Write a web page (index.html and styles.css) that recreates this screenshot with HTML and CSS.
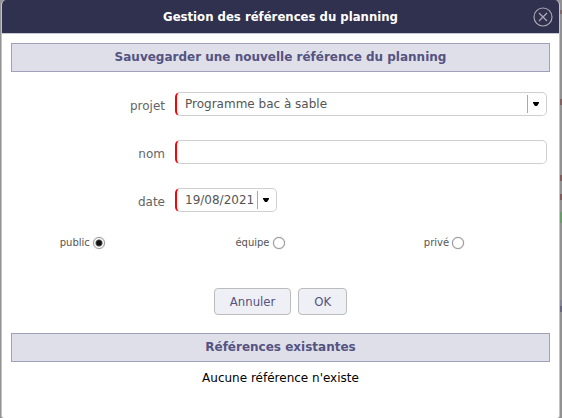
FILE: index.html
```html
<!DOCTYPE html>
<html lang="fr">
<head>
    <meta charset="UTF-8">
    <meta name="viewport" content="width=device-width, initial-scale=1.0">
    <title>Gestion des références du planning</title>
    <link rel="stylesheet" href="styles.css">
</head>
<body>
    <div class="dialog" role="dialog" aria-labelledby="dialogTitle">
        <div class="dialog-header">
            <h1 class="dialog-title" id="dialogTitle">Gestion des références du planning</h1>
            <button type="button" class="close-btn" aria-label="Fermer">
                <svg width="20" height="20" viewBox="0 0 20 20" fill="none" stroke="#a9a9b4">
                    <circle cx="10" cy="10" r="9" stroke-width="1.2"/>
                    <path d="M6 6l8 8M14 6l-8 8" stroke-width="1.3"/>
                </svg>
            </button>
        </div>
        <form class="dialog-body">
            <h2 class="section-title">Sauvegarder une nouvelle référence du planning</h2>
            <div class="fields">
                <div class="field">
                    <label class="field-label" for="projet">projet</label>
                    <div class="control">
                        <select id="projet" class="control-input control-select">
                            <option>Programme bac à sable</option>
                        </select>
                    </div>
                </div>
                <div class="field">
                    <label class="field-label" for="nom">nom</label>
                    <div class="control">
                        <input type="text" id="nom" class="control-input">
                    </div>
                </div>
                <div class="field">
                    <label class="field-label" for="date">date</label>
                    <div class="control control-date">
                        <input type="text" id="date" class="control-input" value="19/08/2021">
                        <button type="button" class="arrow-btn" aria-label="Calendrier"></button>
                    </div>
                </div>
            </div>
            <div class="privacy">
                <label class="privacy-item">public <input type="radio" name="privacy" class="radio" checked></label>
                <label class="privacy-item">équipe <input type="radio" name="privacy" class="radio"></label>
                <label class="privacy-item">privé <input type="radio" name="privacy" class="radio"></label>
            </div>
            <div class="actions">
                <button type="button" class="btn">Annuler</button>
                <button type="submit" class="btn">OK</button>
            </div>
            <h2 class="section-title">Références existantes</h2>
            <p class="empty">Aucune référence n'existe</p>
        </form>
    </div>
</body>
</html>
```

FILE: styles.css
```css
* {
    box-sizing: border-box;
}
body {
    margin: 0;
    padding: 0 2px 0 1px;
    min-height: 100vh;
    display: flex;
    font-family: Verdana, "DejaVu Sans", sans-serif;
    font-size: 12px;
    color: #656565;
    /* dimmed planning behind the dialog */
    background: #929292 linear-gradient(#929292 10px, #806868 10px 14px, #929292 14px 99px, #806060 99px 105px, #929292 105px 175px, #805c5c 175px 181px, #929292 181px 194px, #805c5c 194px 200px, #929292 200px 212px, #6a9a6c 212px 223px, #929292 223px 300px, #858596 300px 306px, #66667c 306px 312px, #929292 312px) no-repeat right top / 2px 100%;
}
.dialog {
    flex: 1;
    border: 1px solid #c4c4c8;
    border-top: none;
    border-bottom: none;
    border-radius: 5px 5px 3px 3px;
    background-color: #fff;
    overflow: hidden;
}
.dialog-header {
    display: flex;
    align-items: center;
    height: 34px;
    padding: 0 6px 0 26px;
    background-color: #30304f;
    border-bottom: 1px solid #c8c8d4;
}
.dialog-title {
    flex: 1;
    margin: 0;
    font-family: Tahoma, "DejaVu Sans Condensed", sans-serif;
    font-size: 13px;
    line-height: 16px;
    text-align: center;
    color: #fff;
}
.close-btn {
    display: flex;
    padding: 0;
    border: none;
    background: none;
    cursor: pointer;
}
.dialog-body {
    padding: 9px;
}
.section-title {
    margin: 0;
    padding: 6px;
    border: 1px solid #a0a0bc;
    background-color: #dfdfe9;
    font-size: 12px;
    line-height: 15px;
    text-align: center;
    color: #545381;
}
.fields {
    display: flex;
    flex-direction: column;
    gap: 22px;
    padding: 20px 3px 0 0;
}
.field {
    display: flex;
}
.field-label {
    width: 164px;
    padding: 2px 10px 0 0;
    line-height: 24px;
    text-align: right;
}
.control {
    flex: 1;
    display: flex;
    height: 24px;
    border: 1px solid #d0d0d0;
    border-left: 2px solid #f00;
    border-radius: 5px;
}
.control-date {
    flex: none;
    width: 102px;
}
.control-input {
    flex: 1;
    min-width: 0;
    padding: 0 0 0 8px;
    border: none;
    outline: none;
    background: none;
    font-family: inherit;
    font-size: 12px;
    color: #555;
}
.control-select,
.arrow-btn {
    appearance: none;
    background: url("data:image/svg+xml,%3Csvg xmlns='http://www.w3.org/2000/svg' width='19' height='18'%3E%3Cpath d='M.5 0v18' stroke='%23a8a8a8'/%3E%3Cpath d='M6 7h6v1l-2 3h-2l-2-3z'/%3E%3C/svg%3E") no-repeat right center;
}
.arrow-btn {
    width: 19px;
    padding: 0;
    border: none;
}
.privacy {
    display: grid;
    grid-template-columns: repeat(3, 1fr);
    padding-top: 22px;
}
.privacy-item {
    display: flex;
    align-items: center;
    justify-content: flex-end;
    gap: 3px;
    padding-right: calc(50% - 4px);
    font-size: 10px;
    line-height: 14px;
    color: #555;
}
.radio {
    appearance: none;
    width: 12px;
    height: 12px;
    margin: 0;
    border: 1px solid #999;
    border-radius: 50%;
    background-color: #fff;
    box-shadow: 0 0 1px #999;
}
.radio:checked {
    background: radial-gradient(circle, #111 2px, #444 3px, #fff 4px);
}
.actions {
    display: flex;
    justify-content: center;
    gap: 7px;
    padding: 38px 0 18px;
}
.btn {
    height: 27px;
    padding: 0 15px;
    border: 1px solid #bcbcbc;
    border-radius: 4px;
    background-color: #efeff6;
    font-family: Tahoma, "DejaVu Sans Condensed", sans-serif;
    font-size: 13px;
    color: #545381;
    cursor: pointer;
}
.empty {
    margin: 0;
    padding-top: 8px;
    line-height: 17px;
    text-align: center;
    color: #000;
}
```
